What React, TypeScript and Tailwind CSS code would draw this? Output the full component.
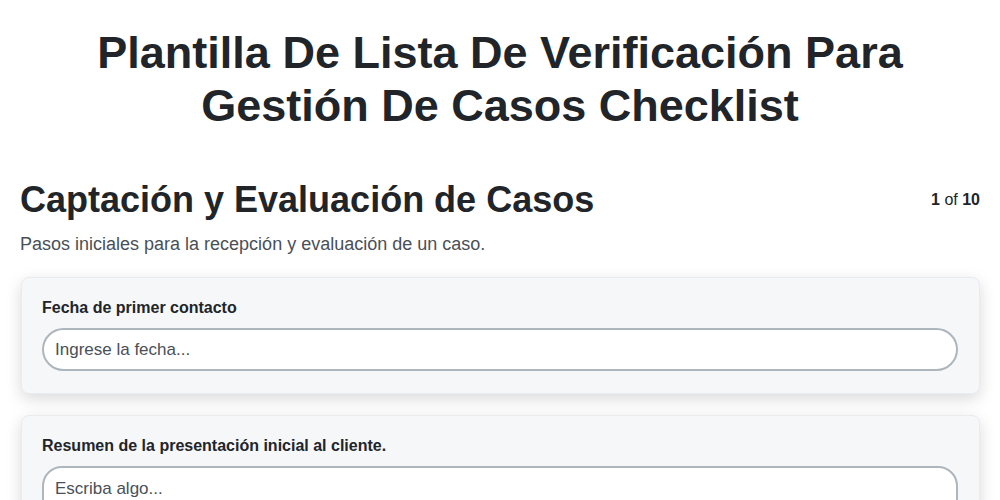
const fields = [
  { label: "Fecha de primer contacto", placeholder: "Ingrese la fecha...", kind: "input" },
  { label: "Resumen de la presentación inicial al cliente.", placeholder: "Escriba algo...", kind: "textarea" },
];

const App = () => {
  return (
    <main className="min-h-screen bg-white text-[#212529] font-['Liberation_Sans',Arial,sans-serif]">
      <h1 className="pt-[26px] px-20 text-center text-[45px] leading-[53px] font-bold">
        Plantilla De Lista De Verificación Para Gestión De Casos Checklist
      </h1>

      <section className="px-5 mt-[46px]">
        <div className="flex items-start justify-between">
          <h2 className="text-[36px] leading-[43px] font-bold">Captación y Evaluación de Casos</h2>
          <p className="mt-[10px] text-base">
            <b>1</b> of <b>10</b>
          </p>
        </div>
        <p className="mt-[9px] text-lg text-[#495057]">
          Pasos iniciales para la recepción y evaluación de un caso.
        </p>

        <div className="mt-[19px] ml-px flex flex-col gap-[21px]">
          {fields.map((f) => (
            <div
              key={f.label}
              className="bg-[#f6f7f9] border border-[#e9ecef] rounded-lg pl-5 pr-[21px] pt-5 pb-[22px] shadow-[0_5px_16px_rgba(0,0,0,0.15)]"
            >
              <label className="block text-base leading-5 font-bold">{f.label}</label>
              {f.kind === "input" ? (
                <input
                  className="mt-[10px] w-full h-[43px] px-[11px] bg-white border-2 border-[#adb5bd] rounded-full text-[17px] placeholder:text-[#495057] outline-none"
                  placeholder={f.placeholder}
                />
              ) : (
                <textarea
                  className="mt-[10px] w-full h-[100px] px-[11px] py-2 bg-white border-2 border-[#adb5bd] rounded-[20px] text-[17px] placeholder:text-[#495057] outline-none resize-none"
                  placeholder={f.placeholder}
                />
              )}
            </div>
          ))}
        </div>
      </section>
    </main>
  );
};

export default App;
